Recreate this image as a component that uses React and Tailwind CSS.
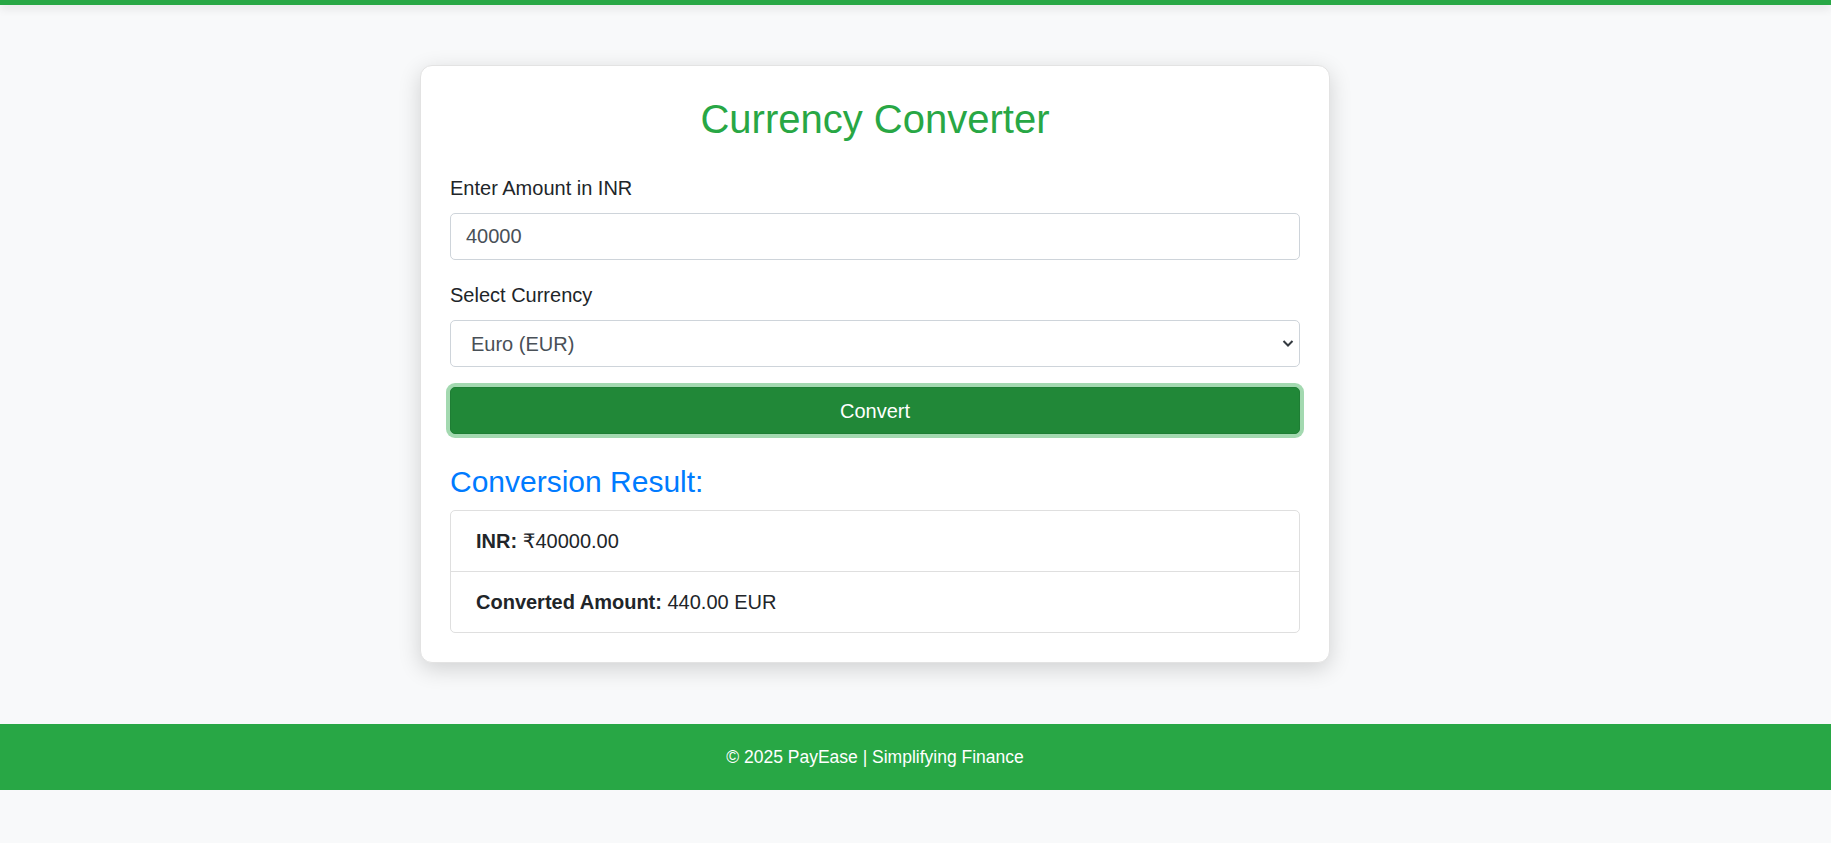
import React, { useState } from "react";

const rates = { EUR: 0.011, USD: 0.012, GBP: 0.0095 };

const App = () => {
  const [amount, setAmount] = useState("40000");
  const [currency, setCurrency] = useState("EUR");

  const inr = Number(amount) || 0;
  const converted = (inr * rates[currency]).toFixed(2);

  return (
    <div className="min-h-screen bg-[#f8f9fa] font-['Liberation_Sans',Arial,'DejaVu_Sans',sans-serif]">
      <div className="h-[5px] bg-[#28a745] shadow-[0_3px_10px_rgba(0,0,0,0.12)]"></div>

      <div className="w-[1750px] flex justify-center pt-[60px] pb-[61px]">
        <div className="w-[910px] bg-white border border-[#e3e3e3] rounded-[12px] p-[29px] shadow-[0_6px_22px_rgba(0,0,0,0.16)]">
          <h1 className="text-[40px] leading-[48px] text-center text-[#28a745] mb-[30px]">
            Currency Converter
          </h1>

          <label className="block text-[20px] leading-[30px] text-[#212529] mb-[10px]">
            Enter Amount in INR
          </label>
          <input
            type="number"
            value={amount}
            onChange={(e) => setAmount(e.target.value)}
            className="block w-full h-[47px] border border-[#ced4da] rounded-[5px] px-[15px] text-[20px] text-[#495057] outline-none mb-[20px] [appearance:textfield]"
          />

          <label className="block text-[20px] leading-[30px] text-[#212529] mb-[10px]">
            Select Currency
          </label>
          <div className="relative">
            <select
              value={currency}
              onChange={(e) => setCurrency(e.target.value)}
              className="block w-full h-[47px] border border-[#ced4da] rounded-[5px] pl-[20px] pr-[40px] text-[20px] text-[#495057] bg-white outline-none appearance-none"
            >
              <option value="EUR">Euro (EUR)</option>
              <option value="USD">US Dollar (USD)</option>
              <option value="GBP">British Pound (GBP)</option>
            </select>
            <svg
              className="absolute right-[6px] top-[19px] pointer-events-none"
              width="12"
              height="9"
              viewBox="0 0 12 9"
            >
              <path d="M1.5 2 L6 6.5 L10.5 2" fill="none" stroke="#343a40" strokeWidth="2" />
            </svg>
          </div>

          <button
            type="button"
            className="block w-full h-[47px] mt-[20px] bg-[#218838] border border-[#1e7e34] rounded-[5px] text-white text-[20px] shadow-[0_0_0_4px_rgba(72,180,97,0.5)]"
          >
            Convert
          </button>

          <div className="mt-[30px]">
            <h4 className="text-[30px] leading-[36px] text-[#007bff] mb-[10px]">Conversion Result:</h4>
            <ul className="border border-[#dfdfdf] rounded-[5px]">
              <li className="px-[25px] py-[15px] text-[20px] leading-[30px] text-[#212529]">
                <strong>INR:</strong> ₹{inr.toFixed(2)}
              </li>
              <li className="px-[25px] py-[15px] text-[20px] leading-[30px] text-[#212529] border-t border-[#dfdfdf]">
                <strong>Converted Amount:</strong> {converted} {currency}
              </li>
            </ul>
          </div>
        </div>
      </div>

      <footer className="bg-[#28a745] py-[20px] text-white">
        <div className="w-[1750px] text-center text-[17.5px] leading-[26px]">
          © 2025 PayEase | Simplifying Finance
        </div>
      </footer>
    </div>
  );
};

export default App;
